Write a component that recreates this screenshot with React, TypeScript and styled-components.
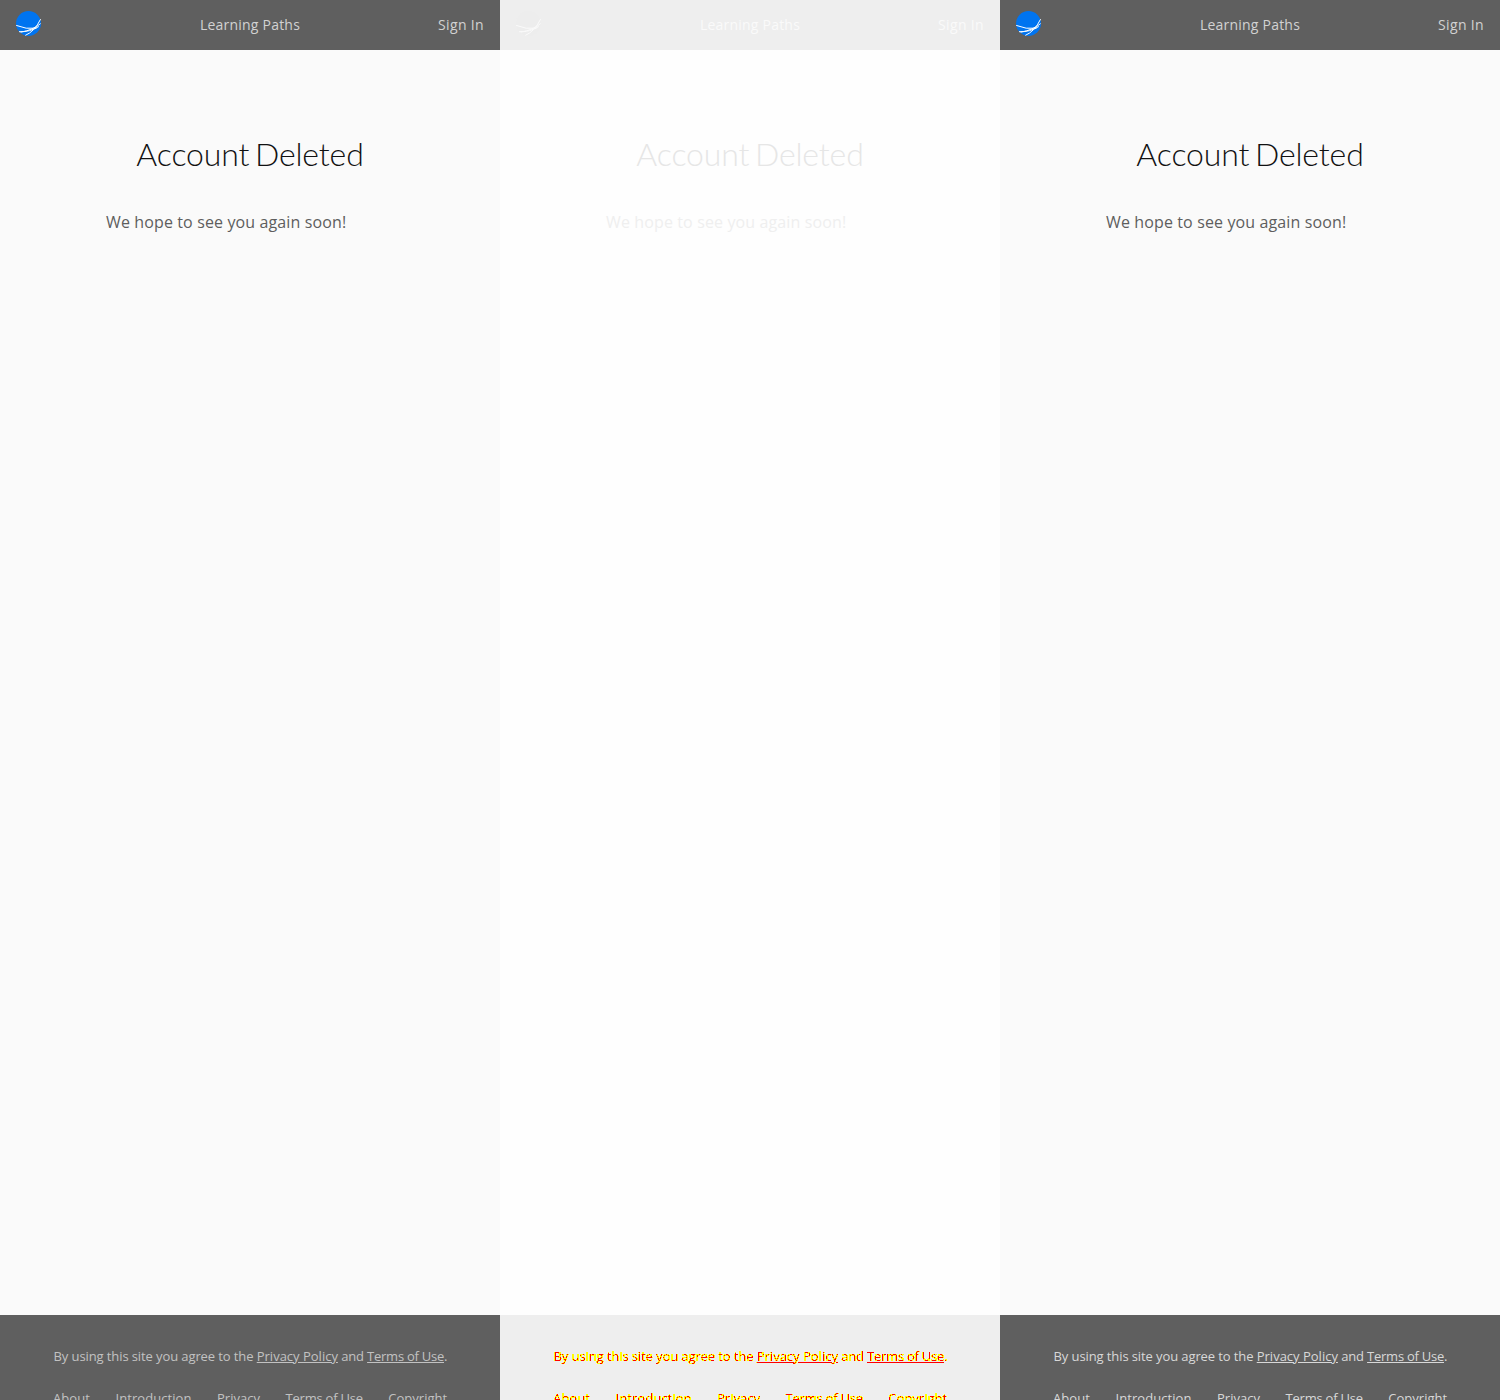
import React from "react";
import styled, { createGlobalStyle, css } from "styled-components";

type Variant = "before" | "diff" | "after";

const GlobalStyle = createGlobalStyle`
  html, body { margin: 0; padding: 0; }
  body { font-family: "Open Sans", sans-serif; background: #fafafa; }
`;

const Comparison = styled.div`
  display: grid;
  grid-template-columns: repeat(3, 500px);
  width: 1500px;
  height: 1400px;
  overflow: hidden;
`;

const Page = styled.section<{ $v: Variant }>`
  display: flex;
  flex-direction: column;
  height: 1400px;
  overflow: hidden;
  background: ${(p) => (p.$v === "diff" ? "#fefefe" : "#fafafa")};
`;

const Header = styled.header<{ $v: Variant }>`
  display: grid;
  grid-template-columns: 1fr auto 1fr;
  align-items: center;
  flex: none;
  height: 50px;
  padding: 0 16px;
  box-sizing: border-box;
  background: ${(p) => (p.$v === "diff" ? "#eeeeee" : "#5f5f5f")};
`;

const NavLink = styled.a<{ $v: Variant; $end?: boolean }>`
  justify-self: ${(p) => (p.$end ? "end" : "center")};
  font-size: 14px;
  line-height: 20px;
  letter-spacing: ${(p) => (p.$end ? "0.35px" : "0.22px")};
  color: ${(p) => (p.$v === "diff" ? "#fafafa" : "#d2d2d2")};
`;

const Mark = styled.svg`
  display: block;
  width: 25px;
  height: 25px;
  margin-top: -3px;
`;

const Main = styled.main`
  flex: none;
  height: 1265px;
  box-sizing: border-box;
  padding: 79px 106px 0;
`;

const Title = styled.h1<{ $v: Variant }>`
  margin: 0;
  font: 300 32px/50px Lato, sans-serif;
  letter-spacing: -0.15px;
  word-spacing: -2.8px;
  text-align: center;
  white-space: nowrap;
  color: ${(p) => (p.$v === "diff" ? "#e6e6e6" : "#111")};
`;

const Message = styled.p<{ $v: Variant }>`
  margin: 31px 0 0;
  font-size: 16px;
  line-height: 24px;
  letter-spacing: 0.125px;
  color: ${(p) => (p.$v === "diff" ? "#efefef" : "#5e5e5e")};
`;

const Footer = styled.footer<{ $v: Variant }>`
  flex: none;
  height: 180px;
  box-sizing: border-box;
  padding-top: 31px;
  background: ${(p) => (p.$v === "diff" ? "#eeeeee" : "#5f5f5f")};
`;

const FooterText = styled.div<{ $v: Variant }>`
  font-size: 13px;
  line-height: 20px;
  color: ${(p) => (p.$v === "before" ? "#c2c2c2" : p.$v === "after" ? "#d8d8d8" : "#ff0000")};
  ${(p) => p.$v === "diff" && css`filter: url(#changed-pixels);`}
`;

const Agreement = styled.p`
  margin: 0;
  padding-left: 1px;
  text-align: center;
  white-space: nowrap;
`;

const Tracked = styled.span<{ $track: number }>`
  letter-spacing: ${(p) => p.$track}px;
`;

const InlineLink = styled.a<{ $track?: number }>`
  text-decoration: underline;
  letter-spacing: ${(p) => p.$track ?? 0}px;
`;

const FooterNav = styled.nav`
  display: flex;
  justify-content: center;
  gap: 25.5px;
  margin-top: 22px;
`;

const FooterLink = styled.a<{ $track: number }>`
  white-space: nowrap;
  letter-spacing: ${(p) => p.$track}px;
`;

const Logo = ({ v }: { v: Variant }) => {
  const line = v === "diff" ? "#fafafa" : "#ffffff";
  return (
    <Mark viewBox="0 0 25 25" aria-label="Home">
      <circle cx="12.5" cy="12.5" r="12.5" fill={v === "diff" ? "#ededed" : "#0074f0"} />
      <g fill="none" stroke={line} strokeWidth="1">
        <path d="M0.2 14.4 Q10 18.6 20.5 17.2" />
        <path d="M3 20.7 Q14 21.2 22.8 15.5" />
        <path d="M9.3 24.4 Q18.5 20.5 24.6 8.2" />
        <path d="M4.6 21.2 Q17 19 24.6 12.6" />
      </g>
    </Mark>
  );
};

const HiddenDefs = styled.svg`
  position: absolute;
`;

const PixelFilter = () => (
  <HiddenDefs width="0" height="0" aria-hidden="true">
    <filter id="changed-pixels" x="0" y="0" width="100%" height="100%" colorInterpolationFilters="sRGB">
      <feColorMatrix type="matrix" values="0 0 0 0 1  0 0 0 1 0  0 0 0 0 0  0 0 0 1 0" />
      <feComponentTransfer>
        <feFuncG type="discrete" tableValues="1 1 1 1 1 1 1 1 1 1 1 1 1 1 1 0 0 0 0 0" />
        <feFuncA type="discrete" tableValues="0 1 1 1 1 1 1 1 1 1 1 1 1 1 1 1 1 1 1 1" />
      </feComponentTransfer>
    </filter>
  </HiddenDefs>
);

const links = [
  { label: "About", track: 0.12 },
  { label: "Introduction", track: 0.05 },
  { label: "Privacy", track: 0.03 },
  { label: "Terms of Use", track: -0.22 },
  { label: "Copyright", track: 0 },
];

const Snapshot = ({ v }: { v: Variant }) => (
  <Page $v={v}>
    <Header $v={v}>
      <Logo v={v} />
      <NavLink $v={v}>Learning Paths</NavLink>
      <NavLink $v={v} $end>Sign In</NavLink>
    </Header>
    <Main>
      <Title $v={v}>Account Deleted</Title>
      <Message $v={v}>We hope to see you again soon!</Message>
    </Main>
    <Footer $v={v}>
      <FooterText $v={v}>
        <Agreement>
          <Tracked $track={-0.1}>By using this site you agree to the </Tracked>
          <InlineLink>Privacy Policy</InlineLink>
          <Tracked $track={-0.15}> and </Tracked>
          <InlineLink $track={-0.25}>Terms of Use</InlineLink>.
        </Agreement>
        <FooterNav>
          {links.map((l) => (
            <FooterLink key={l.label} $track={l.track}>{l.label}</FooterLink>
          ))}
        </FooterNav>
      </FooterText>
    </Footer>
  </Page>
);

export default function App() {
  return (
    <>
      <GlobalStyle />
      <PixelFilter />
      <Comparison>
        <Snapshot v="before" />
        <Snapshot v="diff" />
        <Snapshot v="after" />
      </Comparison>
    </>
  );
}
